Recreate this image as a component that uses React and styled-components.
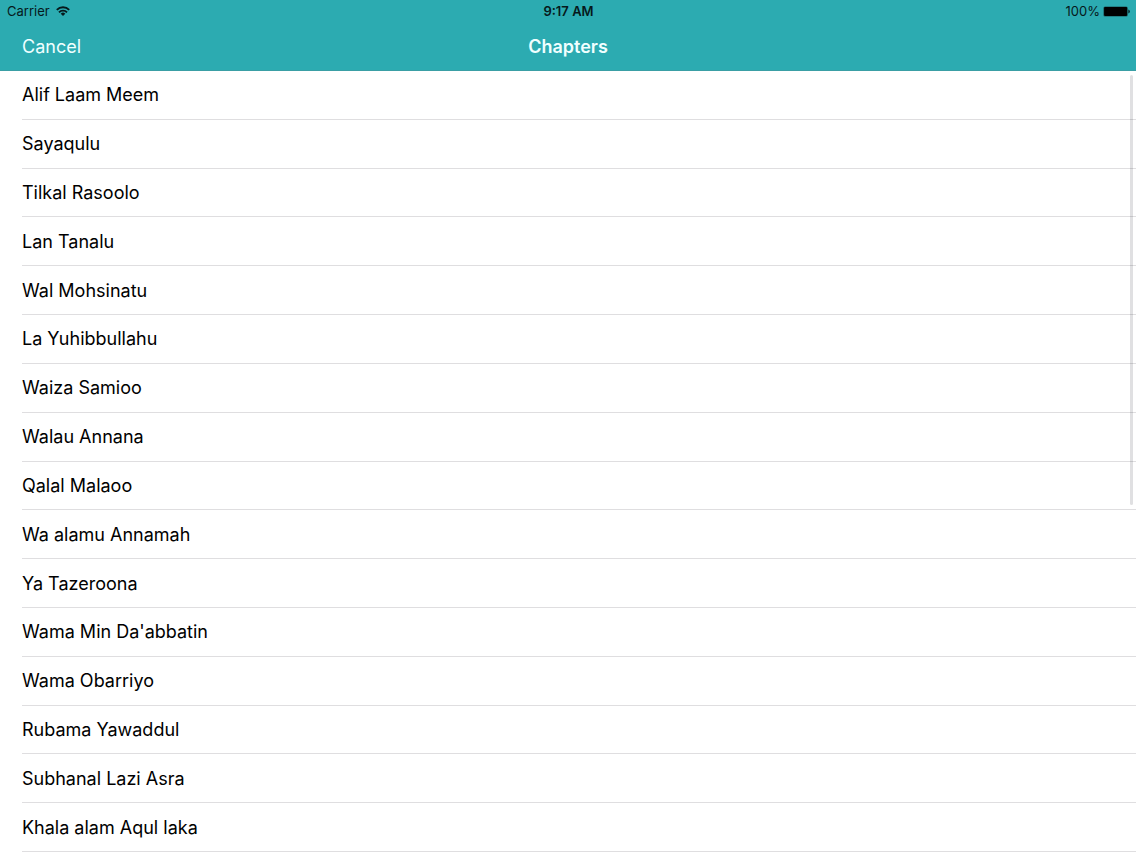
import React from "react";
import styled, { createGlobalStyle } from "styled-components";

const chapters = [
  "Alif Laam Meem",
  "Sayaqulu",
  "Tilkal Rasoolo",
  "Lan Tanalu",
  "Wal Mohsinatu",
  "La Yuhibbullahu",
  "Waiza Samioo",
  "Walau Annana",
  "Qalal Malaoo",
  "Wa alamu Annamah",
  "Ya Tazeroona",
  "Wama Min Da'abbatin",
  "Wama Obarriyo",
  "Rubama Yawaddul",
  "Subhanal Lazi Asra",
  "Khala alam Aqul laka",
];

const App = () => {
  return (
    <StPage>
      <GlobalStyle />
      <StHeader>
        <StStatusBar>
          <StStatusSide>
            <span>Carrier</span>
            <WifiIcon />
          </StStatusSide>
          <StTime>9:17 AM</StTime>
          <StStatusSide $end>
            <span>100%</span>
            <BatteryIcon />
          </StStatusSide>
        </StStatusBar>
        <StNavBar>
          <StCancel type="button">Cancel</StCancel>
          <StTitle>Chapters</StTitle>
        </StNavBar>
      </StHeader>
      <StMain>
        <StList>
          {chapters.map((chapter) => (
            <StRow key={chapter}>{chapter}</StRow>
          ))}
        </StList>
        <StScrollThumb />
      </StMain>
    </StPage>
  );
};

const WifiIcon = () => (
  <svg width="14" height="10" viewBox="0 0 14 10" aria-hidden="true">
    <g fill="none" stroke="#06191b" strokeWidth="1.9">
      <path d="M0.8 3.9a8.7 8.7 0 0 1 12.4 0" />
      <path d="M3 6.3a5.6 5.6 0 0 1 8 0" />
    </g>
    <path d="M7 10 4.7 7.8a3.2 3.2 0 0 1 4.6 0z" fill="#06191b" />
  </svg>
);

const BatteryIcon = () => (
  <svg width="27" height="11" viewBox="0 0 27 11" aria-hidden="true">
    <rect x="0.4" y="0.4" width="24.4" height="10.2" rx="1.6" fill="#1c5a5e" />
    <rect x="1.1" y="1.1" width="23" height="8.8" rx="0.8" fill="#000" />
    <path d="M25.4 3.6q1.4 0.5 1.4 1.9t-1.4 1.9z" fill="#06191b" />
  </svg>
);

export default App;

const GlobalStyle = createGlobalStyle`
  * {
    box-sizing: border-box;
  }

  body {
    margin: 0;
    background-color: #fff;
    color: #000;
    font-family: Inter, "Liberation Sans", sans-serif;
  }
`;

const StPage = styled.div`
  height: 100vh;
  display: flex;
  flex-direction: column;
  overflow: hidden;
`;

const StHeader = styled.header`
  flex-shrink: 0;
  border-bottom: 1px solid #3a9fa5;
  background-color: #2cabb1;
`;

const StStatusBar = styled.div`
  display: grid;
  grid-template-columns: 1fr auto 1fr;
  align-items: center;
  height: 22px;
  padding: 0 6px 0 7px;
  color: #06191b;
  font-size: 13px;
`;

const StStatusSide = styled.div`
  display: flex;
  align-items: center;
  justify-content: ${({ $end }) => ($end ? "flex-end" : "flex-start")};
  gap: ${({ $end }) => ($end ? "3px" : "6px")};
`;

const StTime = styled.span`
  font-weight: 600;
`;

const StNavBar = styled.div`
  display: grid;
  grid-template-columns: 1fr auto 1fr;
  align-items: center;
  height: 48px;
  padding: 0 22px;
  color: #f0ffff;
`;

const StCancel = styled.button`
  justify-self: start;
  padding: 0;
  border: none;
  background: none;
  color: inherit;
  font-family: inherit;
  font-size: 18px;
  cursor: pointer;
`;

const StTitle = styled.h1`
  margin: 0;
  font-size: 18px;
  font-weight: 600;
`;

const StMain = styled.main`
  position: relative;
  flex: 1;
  min-height: 0;
`;

// rows share the height left under the header
const StList = styled.ul`
  display: grid;
  grid-auto-rows: 1fr;
  height: 100%;
  margin: 0;
  padding: 0 0 0 22px;
  list-style: none;
`;

const StRow = styled.li`
  display: flex;
  align-items: center;
  min-height: 44px;
  border-bottom: 1px solid #dfdee0;
  font-size: 18px;
`;

// scroll indicator floating over the list
const StScrollThumb = styled.div`
  position: absolute;
  top: 4px;
  right: 3px;
  width: 3px;
  height: 55%;
  border-radius: 2px;
  background-color: rgba(0, 0, 20, 0.12);
`;
